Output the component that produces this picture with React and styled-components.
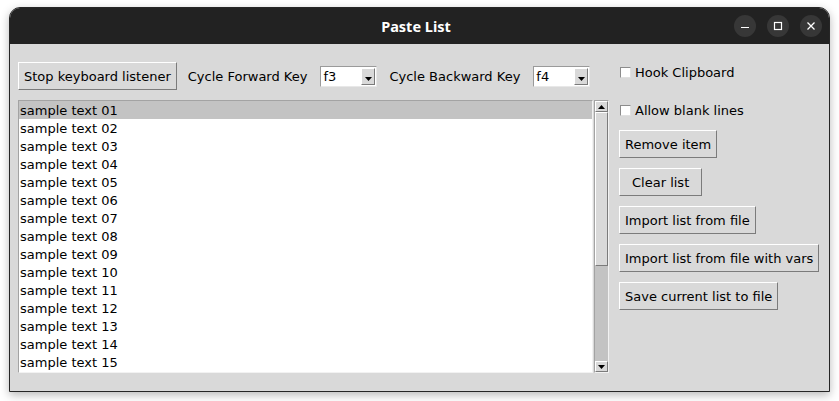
import React from "react";
import styled, { createGlobalStyle } from "styled-components";

const Global = createGlobalStyle`
  html, body { margin: 0; padding: 0; background: #ffffff; }
  body { width: 839px; height: 401px; overflow: hidden; }
  * { box-sizing: border-box; }
`;

const Page = styled.div`
  width: 839px;
  height: 401px;
  padding: 7px 0 0 9px;
`;

const Window = styled.div`
  width: 821px;
  height: 385px;
  border: 1px solid #262626;
  border-radius: 11px 11px 0 0;
  background: #d9d9d9;
  box-shadow: 0 3px 10px rgba(0, 0, 0, 0.28);
  display: flex;
  flex-direction: column;
  overflow: hidden;
`;

const TitleBar = styled.div`
  height: 36px;
  background: #222222;
  display: grid;
  grid-template-columns: 1fr auto 1fr;
  align-items: center;
  padding: 0 7px 0 0;
  flex-shrink: 0;
`;

const Title = styled.div`
  grid-column: 2;
  color: #ffffff;
  font-family: "Noto Sans", "DejaVu Sans", sans-serif;
  font-weight: 700;
  font-size: 14.5px;
  margin-top: -1px;
`;

const Controls = styled.div`
  grid-column: 3;
  justify-self: end;
  display: flex;
  gap: 11px;
`;

const CircleBtn = styled.div`
  width: 22px;
  height: 22px;
  border-radius: 50%;
  background: #373737;
  display: flex;
  align-items: center;
  justify-content: center;
`;

const Body = styled.div`
  flex: 1;
  display: flex;
  padding: 18px 0 0 8px;
  gap: 10px;
  font-family: "DejaVu Sans", "Liberation Sans", sans-serif;
  font-size: 13px;
  color: #000000;
`;

const LeftCol = styled.div`
  display: flex;
  flex-direction: column;
  width: 591px;
`;

const Toolbar = styled.div`
  display: flex;
  align-items: center;
  height: 28px;
`;

const TkButton = styled.div`
  height: 28px;
  display: inline-flex;
  align-items: center;
  justify-content: center;
  padding: 0 ${(p) => p.$pad ?? 5}px;
  border: 1px solid;
  border-color: #ffffff #7b7b7b #7b7b7b #ffffff;
  background: #d9d9d9;
  white-space: nowrap;
  line-height: 1;
`;

const Label = styled.span`
  margin: 0 ${(p) => p.$right}px 0 ${(p) => p.$left}px;
  white-space: nowrap;
`;

const Combo = styled.div`
  width: 57px;
  height: 21px;
  display: flex;
  align-items: stretch;
  background: #ffffff;
  border: 1px solid;
  border-color: #9a9a9a #e8e8e8 #e8e8e8 #9a9a9a;
  padding: 1px;
`;

const ComboText = styled.div`
  flex: 1;
  display: flex;
  align-items: center;
  padding-left: 1px;
`;

const ComboArrow = styled.div`
  width: 14px;
  background: #d9d9d9;
  border: 1px solid;
  border-color: #ffffff #7b7b7b #7b7b7b #ffffff;
  display: flex;
  align-items: flex-end;
  justify-content: center;
  padding-bottom: 3px;
`;

const ListRow = styled.div`
  display: flex;
  margin-top: 10px;
  gap: 1px;
`;

const ListBox = styled.div`
  width: 575px;
  height: 273px;
  background: #ffffff;
  border: 1px solid;
  border-color: #a3a3a3 #f2f2f2 #f2f2f2 #a3a3a3;
  overflow: hidden;
`;

const Item = styled.div`
  height: 18px;
  line-height: 20px;
  padding-left: 1px;
  background: ${(p) => (p.$selected ? "#c3c3c3" : "transparent")};
  white-space: nowrap;
`;

const Scrollbar = styled.div`
  width: 15px;
  height: 273px;
  background: #c3c3c3;
  border: 1px solid;
  border-color: #a3a3a3 #f2f2f2 #f2f2f2 #a3a3a3;
  display: flex;
  flex-direction: column;
`;

const ScrollArrow = styled.div`
  height: 11px;
  background: #d9d9d9;
  border: 1px solid;
  border-color: #ffffff #7b7b7b #7b7b7b #ffffff;
  display: flex;
  align-items: center;
  justify-content: center;
`;

const Thumb = styled.div`
  height: 154px;
  background: #d9d9d9;
  border: 1px solid;
  border-color: #ffffff #7b7b7b #7b7b7b #ffffff;
`;

const Trough = styled.div`
  flex: 1;
`;

const RightCol = styled.div`
  display: flex;
  flex-direction: column;
  align-items: flex-start;
`;

const CheckRow = styled.label`
  height: 20px;
  display: flex;
  align-items: center;
  gap: 4px;
  margin-top: ${(p) => p.$top ?? 0}px;
  padding-left: 1px;
`;

const CheckBox = styled.span`
  width: 11px;
  height: 11px;
  background: #ffffff;
  border: 1px solid;
  border-color: #8c8c8c #e0e0e0 #e0e0e0 #8c8c8c;
`;

const ButtonStack = styled.div`
  display: flex;
  flex-direction: column;
  align-items: flex-start;
  gap: 10px;
  margin-top: 10px;
`;

const Tri = ({ dir }) => (
  <svg width="7" height="4" viewBox="0 0 7 4">
    {dir === "up" ? (
      <polygon points="0,4 7,4 3.5,0" fill="#000" />
    ) : (
      <polygon points="0,0 7,0 3.5,4" fill="#000" />
    )}
  </svg>
);

const Minimize = () => (
  <svg width="10" height="10" viewBox="0 0 10 10">
    <line x1="1" y1="6.5" x2="9" y2="6.5" stroke="#fff" strokeWidth="1.2" />
  </svg>
);
const Maximize = () => (
  <svg width="10" height="10" viewBox="0 0 10 10">
    <rect x="1.5" y="1.5" width="7" height="7" fill="none" stroke="#fff" strokeWidth="1.2" />
  </svg>
);
const Close = () => (
  <svg width="10" height="10" viewBox="0 0 10 10">
    <path d="M1.5 1.5 L8.5 8.5 M8.5 1.5 L1.5 8.5" stroke="#fff" strokeWidth="1.3" />
  </svg>
);

const ComboBox = ({ value }) => (
  <Combo>
    <ComboText>{value}</ComboText>
    <ComboArrow>
      <svg width="7" height="4" viewBox="0 0 7 4">
        <polygon points="0,0 7,0 3.5,4" fill="#000" />
      </svg>
    </ComboArrow>
  </Combo>
);

const items = Array.from({ length: 15 }, (_, i) =>
  `sample text ${String(i + 1).padStart(2, "0")}`
);

export default function App() {
  return (
    <>
      <Global />
      <Page>
        <Window>
          <TitleBar>
            <Title>Paste List</Title>
            <Controls>
              <CircleBtn><Minimize /></CircleBtn>
              <CircleBtn><Maximize /></CircleBtn>
              <CircleBtn><Close /></CircleBtn>
            </Controls>
          </TitleBar>
          <Body>
            <LeftCol>
              <Toolbar>
                <TkButton>Stop keyboard listener</TkButton>
                <Label $left={11} $right={13}>Cycle Forward Key</Label>
                <ComboBox value="f3" />
                <Label $left={12} $right={13}>Cycle Backward Key</Label>
                <ComboBox value="f4" />
              </Toolbar>
              <ListRow>
                <ListBox>
                  {items.map((t, i) => (
                    <Item key={t} $selected={i === 0}>{t}</Item>
                  ))}
                </ListBox>
                <Scrollbar>
                  <ScrollArrow><Tri dir="up" /></ScrollArrow>
                  <Thumb />
                  <Trough />
                  <ScrollArrow><Tri dir="down" /></ScrollArrow>
                </Scrollbar>
              </ListRow>
            </LeftCol>
            <RightCol>
              <CheckRow><CheckBox />Hook Clipboard</CheckRow>
              <CheckRow $top={18}><CheckBox />Allow blank lines</CheckRow>
              <ButtonStack>
                <TkButton>Remove item</TkButton>
                <TkButton $pad={12}>Clear list</TkButton>
                <TkButton>Import list from file</TkButton>
                <TkButton>Import list from file with vars</TkButton>
                <TkButton>Save current list to file</TkButton>
              </ButtonStack>
            </RightCol>
          </Body>
        </Window>
      </Page>
    </>
  );
}
